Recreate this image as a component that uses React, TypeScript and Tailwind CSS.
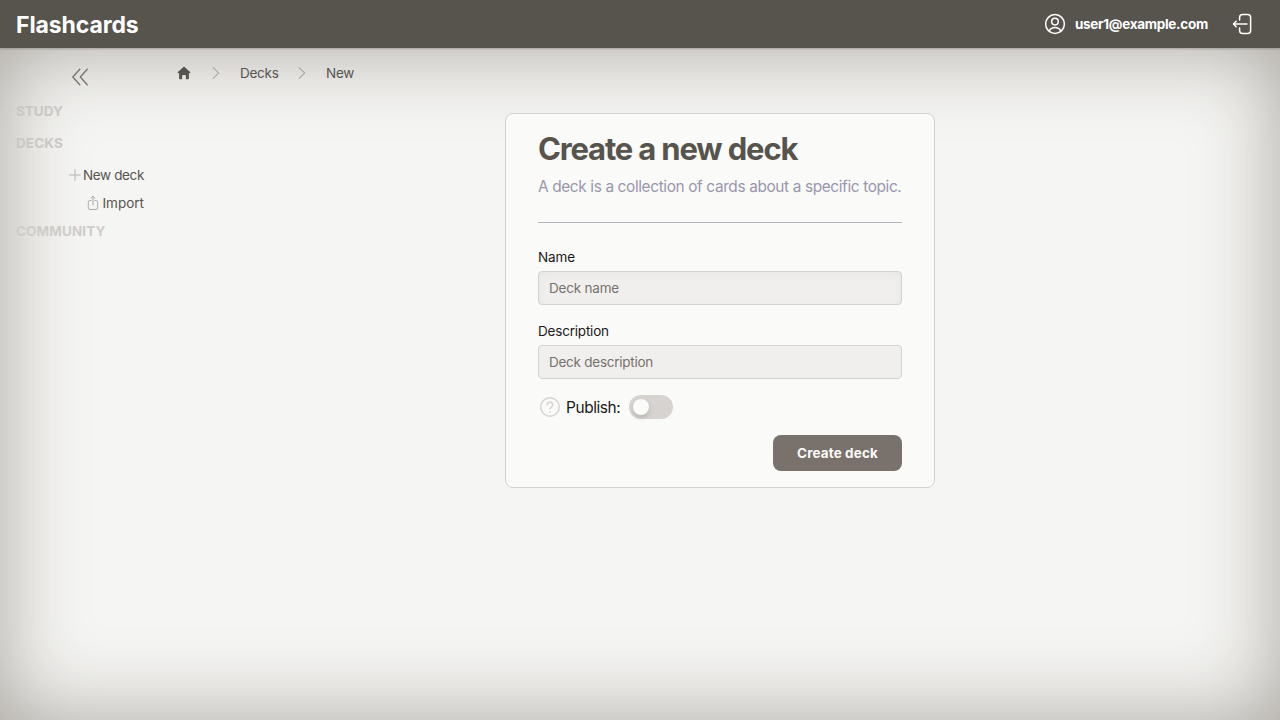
import type { ReactNode } from "react";

function Icon({ className, view = "0 0 24 24", width = 1.5, children }: { className: string; view?: string; width?: number; children: ReactNode }) {
  return (
    <svg className={className} viewBox={view} fill="none" stroke="currentColor" strokeWidth={width} strokeLinecap="round" strokeLinejoin="round" aria-hidden="true">
      {children}
    </svg>
  );
}

function Header() {
  return (
    <header className="relative z-10 flex h-12 shrink-0 items-center justify-between bg-[#57544e] pr-[26px] pl-4 text-white shadow-[0_1px_2px_rgba(87,75,70,0.35)]">
      <a className="pt-px text-[23px] leading-8 font-bold tracking-[-0.1px]">Flashcards</a>
      <div className="flex items-center">
        <Icon className="mr-2 size-6">
          <circle cx="12" cy="12" r="9.4" />
          <circle cx="12" cy="9.6" r="3.3" />
          <path d="M6.4 18.6C7.6 16.3 9.6 15.4 12 15.4s4.4.9 5.6 3.2" />
        </Icon>
        <span className="w-[133px] text-[13.5px] leading-5 font-bold tracking-[-0.3px] whitespace-nowrap">user1@example.com</span>
        <Icon className="ml-[22px] size-6">
          <path d="M9.6 8V5.6a3 3 0 0 1 3-3h5a3 3 0 0 1 3 3v12.800a3 3 0 0 1-3 3h-5a3 3 0 0 1-3-3V16" />
          <path d="M17 12H3.600M6.200 9.300 3.500 12l2.700 2.700" />
        </Icon>
      </div>
    </header>
  );
}

function Sidebar() {
  return (
    <aside className="flex w-40 shrink-0 flex-col px-4 pt-[17px]">
      <Icon className="mb-[9px] ml-[52px] size-6 text-stone-500" width={1.3}>
        <path d="M11.800 4.300 4.800 12l7 7.700M19.300 4.300l-7 7.700 7 7.700" />
      </Icon>
      <h2 className="mt-[3px] h-5 text-[13.5px] leading-5 font-bold text-[#cac7c5]">STUDY</h2>
      <h2 className="mt-3 h-5 text-[13.5px] leading-5 font-bold tracking-[0.1px] text-[#cac7c5]">DECKS</h2>
      <a className="mt-3 flex h-5 items-center justify-end gap-0.5 text-[13.5px] leading-5 tracking-[-0.36px] whitespace-nowrap text-[#57544e]">
        <Icon className="size-3 text-[#b8b4b1]" view="0 0 12 12" width={1}>
          <path d="M6 .7v10.600M.7 6h10.600" />
        </Icon>
        New deck
      </a>
      <a className="mt-2 flex h-5 items-center justify-end gap-[3px] text-[13.5px] leading-5 whitespace-nowrap text-[#57544e]">
        <Icon className="h-4 w-3 text-[#aaa5a1]" view="0 0 12 16" width={0.9}>
          <path d="M4 5.500H3a1.700 1.700 0 0 0-1.700 1.700v5.600A1.700 1.700 0 0 0 3 14.500h6a1.700 1.700 0 0 0 1.700-1.700V7.200A1.700 1.700 0 0 0 9 5.500H8M6 10V1.300M4 3.200l2-1.900 2 1.900" />
        </Icon>
        Import
      </a>
      <h2 className="mt-2 h-5 text-[13.5px] leading-5 font-bold tracking-[0.1px] text-[#cfccca]">COMMUNITY</h2>
    </aside>
  );
}

function Chevron() {
  return (
    <Icon className="h-3 w-4 text-[#85807b]" view="0 0 12 12" width={0.9}>
      <path d="m3.200.6 5.400 5.400-5.400 5.400" />
    </Icon>
  );
}

function Breadcrumbs() {
  return (
    <nav className="mt-[15px] ml-4 flex h-5 items-center text-[13.5px] leading-5 text-[#57544e]">
      <svg className="size-4" viewBox="0 0 16 16" fill="currentColor" aria-label="Home">
        <path d="M7.400 2.100a.9.900 0 0 1 1.200 0l5.500 5c.5.5.2 1.100-.4 1.100h-.8v5.100c0 .6-.3.9-.8.9H9.900v-3.400c0-.5-.3-.8-.8-.8H6.900c-.5 0-.8.3-.8.8v3.400H3.900c-.5 0-.8-.3-.8-.9V8.200h-.8c-.6 0-.9-.6-.4-1.100z" />
      </svg>
      <span className="mr-4 ml-4 flex"><Chevron /></span>
      <span className="w-[38px] tracking-[-0.27px]">Decks</span>
      <span className="mr-4 ml-4 flex"><Chevron /></span>
      <span className="tracking-[-0.25px]">New</span>
    </nav>
  );
}

function Field({ label, placeholder, labelClass, inputClass }: { label: string; placeholder: string; labelClass: string; inputClass: string }) {
  return (
    <label className="flex flex-col gap-1">
      <span className={`text-[13.5px] leading-5 text-stone-900 ${labelClass}`}>{label}</span>
      <input
        placeholder={placeholder}
        className={`h-[34px] rounded border border-[#d4d2d0] bg-[#f0efee] px-2.5 text-[13.5px] leading-5 placeholder:text-[#78716c] ${inputClass}`}
      />
    </label>
  );
}

function DeckForm() {
  return (
    <form className="mt-[30px] flex h-[375px] w-[430px] flex-col self-center rounded-lg border border-[#d4d2d0] bg-[#fbfbf9]/90 px-8 pt-[17px]">
      <h1 className="h-9 text-[31px] leading-9 font-bold tracking-[-1.16px] whitespace-nowrap text-[#57544e]">Create a new deck</h1>
      <p className="mt-2 h-6 text-[15.4px] leading-6 tracking-[-0.37px] whitespace-nowrap text-[#9996ac]">A deck is a collection of cards about a specific topic.</p>
      <hr className="mt-[23px] border-[#b4b2c4]" />
      <div className="mt-6 flex flex-col gap-4">
        <Field label="Name" placeholder="Deck name" labelClass="tracking-[-0.1px]" inputClass="tracking-[-0.2px] shadow-[inset_0_2px_8px_rgba(0,0,0,0.045)]" />
        <Field label="Description" placeholder="Deck description" labelClass="tracking-[-0.2px]" inputClass="tracking-[-0.25px]" />
      </div>
      <div className="mt-4 flex h-6 items-center">
        <Icon className="size-6 text-[#d6d3d1]">
          <circle cx="12" cy="12" r="9.300" />
          <path d="M9.300 9.700a2.700 2.700 0 1 1 4.600 1.900c-.9.9-1.900 1.300-1.900 2.500M12 16.800v.1" />
        </Icon>
        <span className="ml-1 w-[63px] pt-0.5 text-[15.4px] leading-6 tracking-[-0.4px] text-stone-900">Publish:</span>
        <button type="button" role="switch" aria-checked="false" className="flex h-6 w-11 items-center rounded-full bg-[#d6d3d1] pl-1">
          <span className="size-4 rounded-full bg-[#fbfbf9] shadow-[0_3px_5px_rgba(0,0,0,0.14)]" />
        </button>
      </div>
      <button type="button" className="mt-4 h-9 w-[129px] self-end rounded-lg bg-[#79716b] text-[13.5px] leading-5 font-bold tracking-[0.12px] text-[#fbfbf9]">
        Create deck
      </button>
    </form>
  );
}

export default function App() {
  return (
    <div className="flex h-screen flex-col overflow-hidden bg-[#f5f5f3] font-['Inter',sans-serif]">
      <Header />
      <div className="flex flex-1 shadow-[inset_0_0_84px_#a8a49e]">
        <Sidebar />
        <main className="flex flex-1 flex-col">
          <Breadcrumbs />
          <DeckForm />
        </main>
      </div>
    </div>
  );
}
